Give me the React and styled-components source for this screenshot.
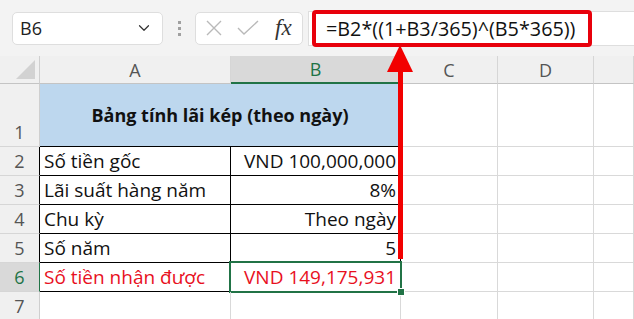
import React from "react";
import styled, { createGlobalStyle, css } from "styled-components";
import { ChevronDown } from "lucide-react";

const GlobalStyle = createGlobalStyle`
  body {
    margin: 0;
    background: #ffffff;
    font-family: "Open Sans", "Liberation Sans", sans-serif;
    overflow: hidden;
  }
`;

const rows = [
  { n: 2, label: "Số tiền gốc", value: "VND 100,000,000" },
  { n: 3, label: "Lãi suất hàng năm", value: "8%" },
  { n: 4, label: "Chu kỳ", value: "Theo ngày" },
  { n: 5, label: "Số năm", value: "5" },
  { n: 6, label: "Số tiền nhận được", value: "VND 149,175,931", result: true },
];

const App = () => {
  return (
    <Page>
      <GlobalStyle />
      <Toolbar>
        <NameBox>
          <span>B6</span>
          <ChevronDown size={18} strokeWidth={1.6} color="#333" />
        </NameBox>
        <Dots>
          <i />
          <i />
          <i />
        </Dots>
        <FxBox>
          <svg width="18" height="18" viewBox="0 0 18 18">
            <path d="M2 2 L16 16 M16 2 L2 16" stroke="#b9b9b9" strokeWidth="1.4" fill="none" />
          </svg>
          <svg width="22" height="16" viewBox="0 0 22 16">
            <path d="M1 8 L7 14 L21 1" stroke="#b9b9b9" strokeWidth="1.4" fill="none" />
          </svg>
          <FxLabel>fx</FxLabel>
        </FxBox>
        <FormulaBar>
          <Highlight>=B2*((1+B3/365)^(B5*365))</Highlight>
        </FormulaBar>
      </Toolbar>

      <Sheet>
        <Corner />
        <ColHeader>A</ColHeader>
        <ColHeader selected>B</ColHeader>
        <ColHeader>C</ColHeader>
        <ColHeader>D</ColHeader>
        <ColHeader />

        <RowHeader tall>1</RowHeader>
        <TitleCell>Bảng tính lãi kép (theo ngày)</TitleCell>
        <Cell />
        <Cell />
        <Cell />

        {rows.map((r) => (
          <React.Fragment key={r.n}>
            <RowHeader selected={r.result} edge>
              {r.n}
            </RowHeader>
            <Cell table red={r.result}>
              {r.label}
            </Cell>
            <Cell table right red={r.result} active={r.result}>
              {r.value}
              {r.result && <FillHandle />}
            </Cell>
            <Cell />
            <Cell />
            <Cell />
          </React.Fragment>
        ))}

        <RowHeader>7</RowHeader>
        <Cell />
        <Cell />
        <Cell />
        <Cell />
        <Cell />
      </Sheet>

      <ArrowShaft />
      <ArrowHead />
    </Page>
  );
};

export default App;

const Page = styled.div`
  position: relative;
  width: 634px;
  height: 319px;
  overflow: hidden;
`;

const Toolbar = styled.div`
  display: flex;
  align-items: center;
  height: 56px;
  padding-left: 12px;
  background: #f3f3f3;
  box-sizing: border-box;
`;

const NameBox = styled.div`
  display: flex;
  align-items: center;
  justify-content: space-between;
  width: 151px;
  height: 33px;
  padding: 0 9px 0 7px;
  box-sizing: border-box;
  background: #ffffff;
  border: 1px solid #dedede;
  border-radius: 5px;
  font-size: 18px;
  color: #222;
`;

const Dots = styled.div`
  display: flex;
  flex-direction: column;
  gap: 3px;
  margin: 0 14px 0 15px;

  i {
    display: block;
    width: 3px;
    height: 3px;
    background: #a0a0a0;
  }
`;

const FxBox = styled.div`
  display: flex;
  align-items: center;
  gap: 14px;
  width: 108px;
  height: 33px;
  padding-left: 9px;
  box-sizing: border-box;
  background: #ffffff;
  border: 1px solid #dedede;
  border-radius: 5px;
`;

const FxLabel = styled.span`
  font-family: "Liberation Serif", "DejaVu Serif", serif;
  font-style: italic;
  font-size: 23px;
  color: #333;
  margin-left: 2px;
`;

const FormulaBar = styled.div`
  flex: 1;
  display: flex;
  align-items: center;
  height: 33px;
  margin-left: 5px;
  background: #ffffff;
  border: 1px solid #dedede;
  border-right: none;
`;

const Highlight = styled.div`
  display: flex;
  align-items: center;
  width: 280px;
  height: 37px;
  margin-left: 3px;
  padding-left: 10px;
  box-sizing: border-box;
  border: 4px solid #e8000b;
  border-radius: 4px;
  font-size: 19.8px;
  color: #111;
  white-space: nowrap;
`;

const Sheet = styled.div`
  display: grid;
  grid-template-columns: 40px 191px 170px 97px 96px 1fr;
  grid-template-rows: 28px 63px repeat(5, 29px) 29px;
  font-size: 19px;
`;

const Corner = styled.div`
  position: relative;
  background: #f0f0f0;
  border-right: 1px solid #cfcfcf;
  border-bottom: 1px solid #c4c4c4;

  &::after {
    content: "";
    position: absolute;
    right: 4px;
    bottom: 4px;
    width: 0;
    height: 0;
    border-left: 19px solid transparent;
    border-bottom: 19px solid #d2d2d2;
  }
`;

const ColHeader = styled.div`
  display: flex;
  align-items: center;
  justify-content: center;
  background: #f0f0f0;
  color: #555;
  font-size: 18px;
  border-right: 1px solid #d6d6d6;
  border-bottom: 1px solid #c4c4c4;

  ${(p) =>
    p.selected &&
    css`
      background: #d9d9d9;
      color: #217346;
      border-bottom: 2px solid #217346;
    `}
`;

const RowHeader = styled.div`
  display: flex;
  justify-content: center;
  align-items: ${(p) => (p.tall ? "flex-end" : "center")};
  padding-bottom: ${(p) => (p.tall ? "2px" : "0")};
  background: #f0f0f0;
  color: #555;
  font-size: 18px;
  border-right: 1px solid ${(p) => (p.edge ? "#000" : "#cfcfcf")};
  border-bottom: 1px solid #d6d6d6;

  ${(p) =>
    p.selected &&
    css`
      background: #d9d9d9;
      color: #217346;
      border-right: 1px solid #217346;
    `}
`;

const TitleCell = styled.div`
  grid-column: span 2;
  display: flex;
  align-items: center;
  justify-content: center;
  background: #bdd7ee;
  font-size: 18px;
  font-weight: 700;
  color: #111;
  border-right: 1px solid #bdd7ee;
  border-bottom: 1px solid #000;
`;

const Cell = styled.div`
  position: relative;
  display: flex;
  align-items: center;
  justify-content: ${(p) => (p.right ? "flex-end" : "flex-start")};
  padding: 0 4px;
  white-space: nowrap;
  color: ${(p) => (p.red ? "#e8101e" : "#111")};
  border-right: 1px solid ${(p) => (p.table ? "#000" : "#d9d9d9")};
  border-bottom: 1px solid ${(p) => (p.table ? "#000" : "#d9d9d9")};

  ${(p) =>
    p.active &&
    css`
      &::before {
        content: "";
        position: absolute;
        left: -2px;
        top: -2px;
        right: -2px;
        bottom: -2px;
        border: 2px solid #217346;
        pointer-events: none;
      }
    `}
`;

const FillHandle = styled.span`
  position: absolute;
  right: -5px;
  bottom: -5px;
  width: 6px;
  height: 6px;
  background: #217346;
  border: 1px solid #ffffff;
  z-index: 2;
`;

const ArrowShaft = styled.div`
  position: absolute;
  left: 398px;
  top: 70px;
  width: 5px;
  height: 189px;
  background: #f20000;
`;

const ArrowHead = styled.div`
  position: absolute;
  left: 387px;
  top: 45px;
  width: 0;
  height: 0;
  border-left: 13px solid transparent;
  border-right: 13px solid transparent;
  border-bottom: 27px solid #f20000;
`;
